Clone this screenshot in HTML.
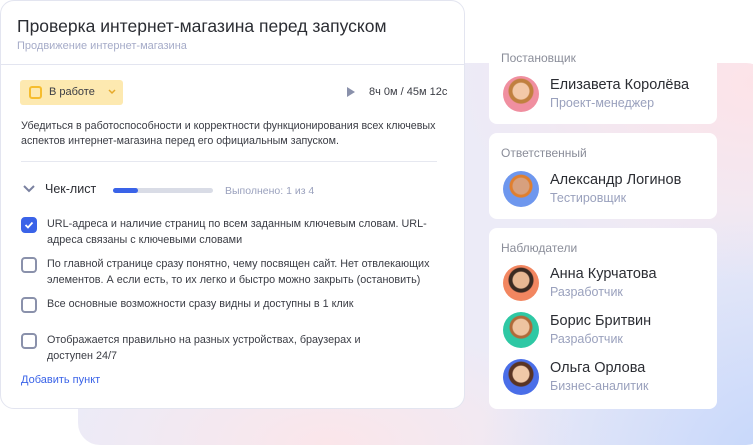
<!DOCTYPE html><html><head><meta charset="utf-8"><style>
*{margin:0;padding:0;box-sizing:border-box}
body{width:753px;height:446px;background:#fff;font-family:"Liberation Sans",sans-serif;position:relative;overflow:hidden;color:#2b2d33}
.abs{position:absolute;white-space:nowrap}
.bg{left:78px;top:63px;width:690px;height:382px;border-radius:22px;background:radial-gradient(ellipse 300px 200px at 680px 20px,#fde3e8 0%,rgba(253,227,232,0) 100%),radial-gradient(ellipse 300px 260px at 700px 400px,#c4d6fb 0%,rgba(196,214,251,0) 100%),radial-gradient(ellipse 260px 120px at 250px 380px,#fbe6ea 0%,rgba(251,230,234,0) 100%),#ecebf7}
.main{left:0;top:0;width:465px;height:409px;background:#fff;border:1px solid #e3e5f0;border-radius:14px}
.card{background:#fff;border-radius:8px;left:489px;width:228px}
.lbl{font-size:12px;color:#8a8d99}
.nm{font-size:14.5px;color:#2b2d33}
.rl{font-size:12.5px;color:#9aa1bd}
.av{width:36px;height:36px;border-radius:50%;left:503px;overflow:hidden}
.cb{left:20px;width:16px;height:16px;border:2px solid #8a91ab;border-radius:4px}
.it{left:46px;font-size:10.8px;line-height:16px;color:#3a3c44}
</style></head><body>
<div class="abs bg"></div>
<div class="abs main">
<div class="abs" style="left:16px;top:15px;font-size:17.5px;color:#2b2d33">Проверка интернет-магазина перед запуском</div>
<div class="abs" style="left:16px;top:39px;font-size:11px;color:#a5abc8">Продвижение интернет-магазина</div>
<div class="abs" style="left:0;top:63px;width:463px;height:1px;background:#e3e5f0"></div>
<div class="abs" style="left:19px;top:79px;width:103px;height:25px;background:#fde9b0;border-radius:3px"></div>
<div class="abs" style="left:28px;top:85px;width:13px;height:13px;border:2px solid #f6bd2e;border-radius:3px"></div>
<div class="abs" style="left:48px;top:85px;font-size:11px;color:#3a3c44">В работе</div>
<svg class="abs" style="left:107px;top:88px" width="8" height="6"><path d="M1 1l3 3 3-3" stroke="#e6a92a" stroke-width="1.5" fill="none"/></svg>
<div class="abs" style="left:346px;top:86px;width:0;height:0;border-left:8px solid #8a91ab;border-top:5px solid transparent;border-bottom:5px solid transparent"></div>
<div class="abs" style="left:368px;top:85px;font-size:11px;color:#3a3c44">8ч 0м / 45м 12с</div>
<div class="abs" style="left:20px;top:118px;font-size:10.7px;line-height:15px;color:#3a3c44">Убедиться в работоспособности и корректности функционирования всех ключевых<br>аспектов интернет-магазина перед его официальным запуском.</div>
<div class="abs" style="left:20px;top:160px;width:416px;height:1px;background:#e6e8f0"></div>
<svg class="abs" style="left:22px;top:184px" width="12" height="8"><path d="M1 1l5 5 5-5" stroke="#7a81a0" stroke-width="2" fill="none"/></svg>
<div class="abs" style="left:44px;top:181px;font-size:12.5px;color:#2b2d33">Чек-лист</div>
<div class="abs" style="left:112px;top:187px;width:100px;height:5px;border-radius:3px;background:#d9dce6"></div>
<div class="abs" style="left:112px;top:187px;width:25px;height:5px;border-radius:3px;background:#3a63e8"></div>
<div class="abs" style="left:224px;top:184px;font-size:10.5px;color:#9aa1bd">Выполнено: 1 из 4</div>
<div class="abs cb" style="top:216px;background:#3a63e8;border-color:#3a63e8"><svg width="12" height="12" style="position:absolute;left:0;top:0"><path d="M2.5 6l2.5 2.5 4.5-5" stroke="#fff" stroke-width="1.8" fill="none"/></svg></div>
<div class="abs it" style="top:215px">URL-адреса и наличие страниц по всем заданным ключевым словам. URL-<br>адреса связаны с ключевыми словами</div>
<div class="abs cb" style="top:256px"></div>
<div class="abs it" style="top:255px">По главной странице сразу понятно, чему посвящен сайт. Нет отвлекающих<br>элементов. А если есть, то их легко и быстро можно закрыть (остановить)</div>
<div class="abs cb" style="top:296px"></div>
<div class="abs it" style="top:295px">Все основные возможности сразу видны и доступны в 1 клик</div>
<div class="abs cb" style="top:332px"></div>
<div class="abs it" style="top:331px">Отображается правильно на разных устройствах, браузерах и<br>доступен 24/7</div>
<div class="abs" style="left:20px;top:373px;font-size:11px;color:#3a63e8">Добавить пункт</div>
</div>
<div class="abs card" style="top:45px;height:79px"></div>
<div class="abs card" style="top:133px;height:86px"></div>
<div class="abs card" style="top:228px;height:181px"></div>
<div class="abs lbl" style="left:501px;top:51px">Постановщик</div>
<div class="abs lbl" style="left:501px;top:146px">Ответственный</div>
<div class="abs lbl" style="left:501px;top:241px">Наблюдатели</div>
<div class="abs av" style="top:76px;background:radial-gradient(circle at 50% 42%,#f3c9a8 0 8px,#c0803f 9px 12px,#f08fa0 13px)"></div>
<div class="abs av" style="top:171px;background:radial-gradient(circle at 50% 42%,#d7a07e 0 8px,#e07f2e 9px 11px,#6e97ee 12px)"></div>
<div class="abs av" style="top:265px;background:radial-gradient(circle at 50% 42%,#e8b894 0 8px,#3a2a22 9px 12px,#f28660 13px)"></div>
<div class="abs av" style="top:312px;background:radial-gradient(circle at 50% 42%,#eec3a0 0 8px,#b06a3a 9px 11px,#2ec8a4 12px)"></div>
<div class="abs av" style="top:359px;background:radial-gradient(circle at 50% 42%,#f0c8a8 0 8px,#5a3424 9px 12px,#4a6ee8 13px)"></div>
<div class="abs nm" style="left:550px;top:77px">Елизавета Королёва</div>
<div class="abs rl" style="left:550px;top:96px">Проект-менеджер</div>
<div class="abs nm" style="left:550px;top:172px">Александр Логинов</div>
<div class="abs rl" style="left:550px;top:191px">Тестировщик</div>
<div class="abs nm" style="left:550px;top:266px">Анна Курчатова</div>
<div class="abs rl" style="left:550px;top:285px">Разработчик</div>
<div class="abs nm" style="left:550px;top:313px">Борис Бритвин</div>
<div class="abs rl" style="left:550px;top:332px">Разработчик</div>
<div class="abs nm" style="left:550px;top:360px">Ольга Орлова</div>
<div class="abs rl" style="left:550px;top:379px">Бизнес-аналитик</div>
</body></html>
